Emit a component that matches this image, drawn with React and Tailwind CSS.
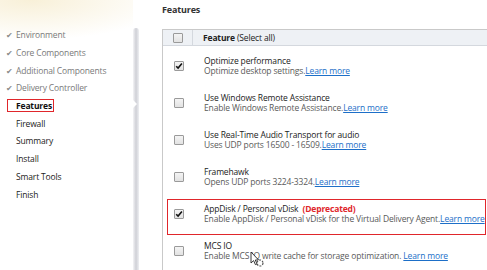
import React from "react";

const steps = [
  { label: "Environment", done: true },
  { label: "Core Components", done: true },
  { label: "Additional Components", done: true },
  { label: "Delivery Controller", done: true },
  { label: "Features", current: true },
  { label: "Firewall" },
  { label: "Summary" },
  { label: "Install" },
  { label: "Smart Tools" },
  { label: "Finish" },
];

const features = [
  { title: "Optimize performance", desc: "Optimize desktop settings.", checked: true },
  { title: "Use Windows Remote Assistance", desc: "Enable Windows Remote Assistance." },
  { title: "Use Real-Time Audio Transport for audio", desc: "Uses UDP ports 16500 - 16509." },
  { title: "Framehawk", desc: "Opens UDP ports 3224-3324." },
  {
    title: "AppDisk / Personal vDisk",
    deprecated: true,
    desc: "Enable AppDisk / Personal vDisk for the Virtual Delivery Agent.",
    checked: true,
    highlight: true,
  },
  { title: "MCS IO", desc: "Enable MCS IO write cache for storage optimization. ", cursor: true },
];

function Checkbox({ checked }) {
  return (
    <div className="w-[10px] h-[10px] border border-[#9a9a9a] rounded-[1px] bg-gradient-to-b from-[#f4f4f4] to-[#e2e2e2] flex items-center justify-center">
      {checked && (
        <svg width="8" height="8" viewBox="0 0 8 8">
          <path d="M1.2 4.2 L3.1 6.1 L6.9 1.6" fill="none" stroke="#111" strokeWidth="1.6" />
        </svg>
      )}
    </div>
  );
}

function Cursor() {
  return (
    <svg width="14" height="16" viewBox="0 0 14 16" className="absolute left-[87px] top-[20px]">
      <path d="M1 1 L1 12 L3.6 9.6 L5.4 13.6 L7 12.9 L5.3 9 L8.6 9 Z" fill="#fff" stroke="#222" strokeWidth="0.9" />
      <circle cx="10" cy="12" r="3" fill="#fff" stroke="#555" strokeWidth="1.2" strokeDasharray="2 1.2" />
    </svg>
  );
}

export default function App() {
  return (
    <div
      className="w-[487px] h-[270px] overflow-hidden flex bg-white text-[8.5px] leading-[11px] tracking-[-0.15px]"
      style={{ fontFamily: '"Open Sans", "Noto Sans", sans-serif' }}
    >
      {/* Sidebar */}
      <div className="w-[133px] shrink-0 bg-[radial-gradient(ellipse_140px_40px_at_30px_0px,#f8f0d8,#ffffff)] pt-[26px]">
        <ul className="flex flex-col">
          {steps.map((s) =>
            s.current ? (
              <li key={s.label} className="h-[17.7px] flex items-center">
                <span className="ml-[7px] pl-[8px] pr-[1px] border border-[#e0262b] font-bold text-[#111] leading-[11px]">
                  {s.label}
                </span>
              </li>
            ) : (
              <li key={s.label} className="h-[17.7px] flex items-center">
                <span className="w-[16px] pl-[6px] text-[#8a8a8a] text-[8px]">{s.done ? "✔" : ""}</span>
                <span className={s.done ? "text-[#7a7a7a]" : "text-[#222]"}>{s.label}</span>
              </li>
            )
          )}
        </ul>
      </div>

      {/* Sidebar separator */}
      <div className="w-[6px] shrink-0 pt-[28px] flex flex-col">
        <div className="relative flex-1 bg-gradient-to-r from-[#f4f4f6] via-[#cfd0d6] to-[#eeeff2] rounded-t-[3px]">
          <div className="absolute left-0 top-[72px] w-0 h-0 border-y-[4px] border-y-transparent border-l-[4px] border-l-white" />
        </div>
      </div>

      {/* Main */}
      <div className="flex-1 pl-[23px] min-w-0">
        <div className="h-[29px] pt-[4px] font-bold text-[9px] text-[#333]">Features</div>
        <div className="border-l border-t border-[#c9c9c9] w-[400px] h-[260px]">
          {/* header */}
          <div className="h-[16px] flex items-center bg-[#eef1f5] border-b border-[#d4d8de]">
            <div className="w-[30px] h-full flex items-center pl-[10px] border-r border-[#d4d8de]">
              <Checkbox />
            </div>
            <div className="pl-[10px] text-[#222]">
              <span className="font-bold">Feature</span> (Select all)
            </div>
          </div>
          {/* rows */}
          {features.map((f) => (
            <div key={f.title} className="relative h-[37px] flex items-center pt-[3px]">
              <div className="w-[41px] pl-[11px]">
                <Checkbox checked={f.checked} />
              </div>
              <div className="whitespace-nowrap leading-[10.5px]">
                <div className="text-[#222]">
                  {f.title}
                  {f.deprecated && <span className="ml-[4px] font-bold text-[#e0262b]">(Deprecated)</span>}
                </div>
                <div className="text-[#5a5a5a]">
                  {f.desc}
                  <span className="text-[#1d6fc8] underline">Learn more </span>
                </div>
              </div>
              {f.highlight && (
                <div className="absolute left-[4px] w-[319px] top-[5px] h-[36px] border border-[#e0262b] pointer-events-none" />
              )}
              {f.cursor && <Cursor />}
            </div>
          ))}
        </div>
      </div>
    </div>
  );
}
